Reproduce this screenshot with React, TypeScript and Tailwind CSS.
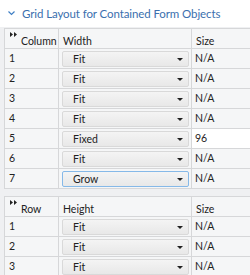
import React from "react";

type Row = { id: number; mode: string; size: string; editable?: boolean; focused?: boolean };

const columns: Row[] = [
  { id: 1, mode: "Fit", size: "N/A" },
  { id: 2, mode: "Fit", size: "N/A" },
  { id: 3, mode: "Fit", size: "N/A" },
  { id: 4, mode: "Fit", size: "N/A" },
  { id: 5, mode: "Fixed", size: "96", editable: true },
  { id: 6, mode: "Fit", size: "N/A" },
  { id: 7, mode: "Grow", size: "N/A", focused: true },
];

const rows: Row[] = [
  { id: 1, mode: "Fit", size: "N/A" },
  { id: 2, mode: "Fit", size: "N/A" },
  { id: 3, mode: "Fit", size: "N/A" },
];

function ExpandIcon() {
  return (
    <svg width="7" height="5" viewBox="0 0 7 5" className="absolute left-[5px] top-[3px]">
      <path d="M0 0 L3 2.5 L0 5 Z M4 0 L7 2.5 L4 5 Z" fill="#222" />
    </svg>
  );
}

function Combo({ value, focused }: { value: string; focused?: boolean }) {
  return (
    <div
      className={`mt-[2px] ml-[3px] mr-[2px] h-[16px] rounded-[2px] border flex items-center justify-between pl-[10px] pr-[5px] bg-gradient-to-b from-[#f4f4f4] to-[#e8e8e8] ${
        focused ? "border-[#86b9e8]" : "border-[#d9d9d9]"
      }`}
    >
      <span className="text-[10.5px] text-[#222] leading-none">{value}</span>
      <svg width="6" height="3" viewBox="0 0 6 3">
        <path d="M0 0 L6 0 L3 3 Z" fill="#222" />
      </svg>
    </div>
  );
}

function GridTable({ first, second, data }: { first: string; second: string; data: Row[] }) {
  const cell = "border-r border-b border-[#d6d7d9]";
  return (
    <div className="grid grid-cols-[54px_133px_60px] border-l border-t border-[#d6d7d9] bg-[#f5f6f7] text-[10.5px] text-[#222]">
      <div className={`${cell} relative h-[20px] flex items-end pl-[16px] pb-[2px] leading-none`}>
        <ExpandIcon />
        <span>{first}</span>
      </div>
      <div className={`${cell} h-[20px] flex items-end pl-[4px] pb-[2px] leading-none`}>{second}</div>
      <div className={`${cell} h-[20px] flex items-end pl-[4px] pb-[2px] leading-none`}>Size</div>
      {data.map((r) => (
        <React.Fragment key={r.id}>
          <div className={`${cell} h-[20px] flex items-center pl-[4px]`}>{r.id}</div>
          <div className={`${cell} h-[20px]`}>
            <Combo value={r.mode} focused={r.focused} />
          </div>
          <div className={`${cell} h-[20px] flex items-center pl-[3px] ${r.editable ? "bg-white" : ""}`}>
            {r.size}
          </div>
        </React.Fragment>
      ))}
    </div>
  );
}

export default function App() {
  return (
    <div className="w-[250px] h-[275px] overflow-hidden bg-white font-['Lato',sans-serif]">
      <div className="h-[27px] flex items-center pl-[8px] gap-[7px]">
        <svg width="7" height="5" viewBox="0 0 7 5">
          <path d="M0.5 0.5 L3.5 3.5 L6.5 0.5" stroke="#3f7fc4" strokeWidth="1.2" fill="none" />
        </svg>
        <span className="text-[11.5px] text-[#3b6fae] whitespace-nowrap tracking-[-0.1px]">
          Grid Layout for Contained Form Objects
        </span>
      </div>
      <div className="h-[248px] bg-[#eff0f2] pl-[4px] pt-[1px] flex flex-col gap-[7px]">
        <GridTable first="Column" second="Width" data={columns} />
        <GridTable first="Row" second="Height" data={rows} />
      </div>
    </div>
  );
}
